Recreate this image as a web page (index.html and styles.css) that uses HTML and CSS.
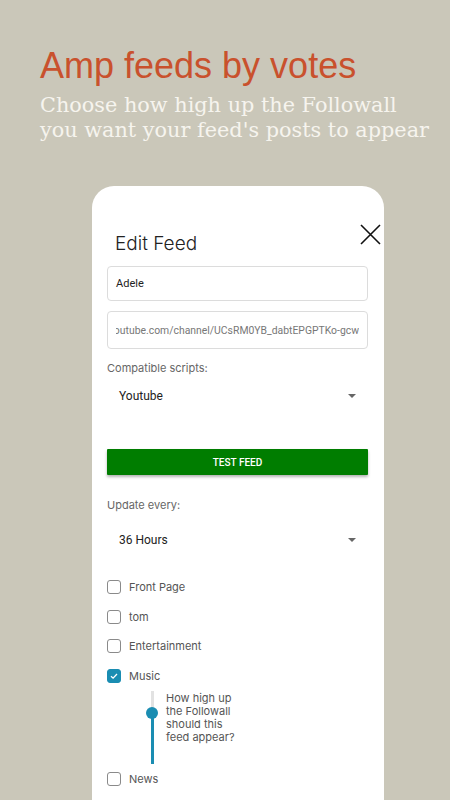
FILE: index.html
```html
<!DOCTYPE html>
<html>
<head>
<meta charset="utf-8">
<link rel="stylesheet" href="styles.css">
</head>
<body>
<header class="hero">
  <h1 class="hero-title">Amp feeds by votes</h1>
  <p class="hero-sub">Choose how high up the Followall<br>you want your feed's posts to appear</p>
</header>
<main class="card">
  <div class="card-head">
    <h2 class="card-title">Edit Feed</h2>
    <svg class="close" width="21" height="21" viewBox="0 0 21 21"><path d="M1 1L20 20M20 1L1 20" stroke="#111" stroke-width="1.6" fill="none"/></svg>
  </div>
  <div class="field"><span class="field-text">Adele</span></div>
  <div class="field field-url"><div class="url-clip"><span class="field-text">https://www.youtube.com/channel/UCsRM0YB_dabtEPGPTKo-gcw</span></div></div>
  <div class="label lbl-scripts">Compatible scripts:</div>
  <div class="select"><span>Youtube</span><span class="caret"></span></div>
  <button class="btn">TEST FEED</button>
  <div class="label lbl-update">Update every:</div>
  <div class="select select2"><span>36 Hours</span><span class="caret"></span></div>
  <ul class="checks">
    <li class="check"><span class="box"></span><span>Front Page</span></li>
    <li class="check"><span class="box"></span><span>tom</span></li>
    <li class="check"><span class="box"></span><span>Entertainment</span></li>
    <li class="check"><span class="box on"><svg width="10" height="10" viewBox="0 0 10 10"><path d="M2 5.2L4.1 7.2L8 3" stroke="#fff" stroke-width="1.3" fill="none"/></svg></span><span>Music</span></li>
    <li class="slider-row">
      <div class="slider"><span class="track-top"></span><span class="thumb"></span><span class="track-bot"></span></div>
      <p class="slider-text">How high up<br>the Followall<br>should this<br>feed appear?</p>
    </li>
    <li class="check"><span class="box"></span><span>News</span></li>
  </ul>
</main>
</body>
</html>
```
FILE: styles.css
```css
* { box-sizing: border-box; }
html, body { margin: 0; padding: 0; }
body {
  width: 450px;
  height: 800px;
  overflow: hidden;
  background: #cac7b9;
  font-family: Inter, "Liberation Sans", sans-serif;
}
.hero { padding: 46px 0 0 40px; }
.hero-title {
  margin: 0;
  font-family: "Liberation Sans", Arial, sans-serif;
  font-weight: normal;
  font-size: 36px;
  line-height: 40px;
  color: #c9512d;
}
.hero-sub {
  margin: 7px 0 0;
  font-family: "DejaVu Serif", serif;
  font-size: 20.8px;
  line-height: 25px;
  color: #f6f4ee;
  white-space: nowrap;
}
.card {
  margin: 43px 0 0 92px;
  width: 292px;
  height: 700px;
  background: #fff;
  border-radius: 22px 22px 0 0;
  padding: 0 16px 0 15px;
}
.card-head {
  display: flex;
  justify-content: space-between;
  align-items: flex-start;
  padding-top: 37px;
  height: 80px;
}
.card-title {
  margin: 0;
  padding: 0 0 0 8px;
  font-weight: 300;
  font-size: 19px;
  line-height: 24px;
  color: #222;
  margin-top: 9px;
}
.close { margin-right: -13px; margin-top: 1px; }
.field {
  height: 35px;
  border: 1px solid #dcdcdc;
  border-radius: 4px;
  display: flex;
  align-items: center;
  padding: 0 8px;
  overflow: hidden;
  font-family: Roboto, sans-serif;
  font-size: 11px;
  color: #222;
}
.field-url {
  margin-top: 10px;
  height: 38px;
  color: #777;
  font-size: 10.4px;
}
.url-clip {
  width: 100%;
  overflow: hidden;
  display: flex;
  justify-content: flex-end;
}
.field-text { white-space: nowrap; flex: none; }
.label {
  font-size: 11px;
  color: #666;
  line-height: 14px;
}
.lbl-scripts { margin-top: 12px; }
.select {
  display: flex;
  justify-content: space-between;
  align-items: center;
  height: 28px;
  margin-top: 7px;
  padding: 0 12px 0 12px;
  font-family: Roboto, sans-serif;
  font-size: 12px;
  color: #222;
}
.caret {
  width: 0; height: 0;
  border-left: 4px solid transparent;
  border-right: 4px solid transparent;
  border-top: 4px solid #666;
}
.btn {
  display: block;
  width: 100%;
  margin-top: 39px;
  height: 26px;
  border: 0;
  border-radius: 1px;
  background: #007d00;
  color: #fff;
  font-family: Roboto, sans-serif;
  font-weight: 500;
  font-size: 10px;
  box-shadow: 0 2px 3px rgba(0,0,0,0.3);
}
.lbl-update { margin-top: 23px; }
.select2 { margin-top: 14px; }
.checks { list-style: none; margin: 26px 0 0; padding: 0; }
.check {
  display: flex;
  align-items: center;
  gap: 8px;
  height: 14px;
  margin-bottom: 15.7px;
  font-size: 11px;
  color: #555;
}
.box {
  width: 14px; height: 14px;
  border: 1.5px solid #8a8a8a;
  border-radius: 3px;
  display: flex; align-items: center; justify-content: center;
}
.box.on { background: #1a8db2; border-color: #1a8db2; }
.slider-row {
  display: flex;
  margin: -7.7px 0 8px 38px;
  height: 73px;
}
.slider {
  width: 14px;
  display: flex;
  flex-direction: column;
  align-items: center;
}
.track-top { width: 3px; height: 19px; background: #e2e2e2; }
.thumb { width: 12px; height: 12px; border-radius: 50%; background: #1a8db2; margin: -3px 0; }
.track-bot { width: 3px; flex: 1; background: #1a8db2; }
.slider-text {
  margin: 1px 0 0 7px;
  font-size: 11px;
  line-height: 13px;
  color: #555;
}
```
